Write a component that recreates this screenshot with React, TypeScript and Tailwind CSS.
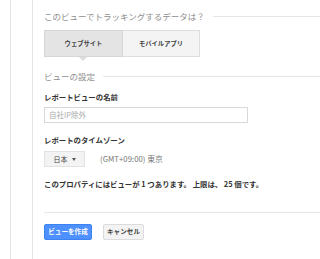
const jp = { fontFamily: '"Noto Sans CJK JP", "Liberation Sans", sans-serif' };

function SectionTitle({ text, className }: { text: string; className?: string }) {
  return (
    <div className={`flex items-center h-[12px] ${className ?? ''}`}>
      <span className="text-[8.5px] leading-[12px] text-[#8f8f8f] whitespace-nowrap">{text}</span>
      <div className="flex-1 border-t border-[#e6e6e6] ml-[8px]" />
    </div>
  );
}

export default function App() {
  return (
    <div className="w-[320px] h-[259px] bg-white flex overflow-hidden" style={jp}>
      <div className="w-[11px] border-r border-[#e3e3e3]" />
      <div className="w-[22px] border-r border-[#e3e3e3]" />
      <div className="flex-1 pl-[11px] pt-[10px]">
        <SectionTitle text="このビューでトラッキングするデータは？" />

        {/* Tabs */}
        <div className="relative mt-[8px] flex h-[27px] w-[156px]">
          <div className="w-[79px] h-full flex items-center justify-center bg-[#e4e4e4] border border-[#d6d6d6] text-[6.3px] font-bold text-[#444]">
            ウェブサイト
          </div>
          <div className="w-[77px] h-full flex items-center justify-center bg-[#f4f4f4] border border-l-0 border-[#dedede] text-[6.3px] font-bold text-[#444]">
            モバイルアプリ
          </div>
          <div className="absolute left-[35px] top-[27px] w-0 h-0 border-l-[4px] border-r-[4px] border-t-[4px] border-l-transparent border-r-transparent border-t-[#dcdcdc]" />
        </div>

        <SectionTitle text="ビューの設定" className="mt-[13px]" />

        <div className="mt-[10px] h-[10px] leading-[10px] text-[7.4px] font-bold text-[#333]">レポートビューの名前</div>
        <div className="mt-[5px] w-[204px] h-[16px] border border-[#d9d9d9] flex items-center pl-[4px] text-[7.5px] text-[#aaa]">
          自社IP除外
        </div>

        <div className="mt-[12px] h-[10px] leading-[10px] text-[7.4px] font-bold text-[#333]">レポートのタイムゾーン</div>
        <div className="mt-[6px] flex items-center h-[16px]">
          <div className="w-[41px] h-full bg-[#f3f3f3] border border-[#e2e2e2] flex items-center justify-center gap-[4px] text-[7px] text-[#444]">
            <span>日本</span>
            <span className="w-0 h-0 border-l-[2.5px] border-r-[2.5px] border-t-[3px] border-l-transparent border-r-transparent border-t-[#555]" />
          </div>
          <span className="ml-[15px] text-[7.8px] text-[#777]">(GMT+09:00) 東京</span>
        </div>

        <div className="mt-[12px] h-[10px] leading-[10px] text-[7.4px] font-bold text-[#333] whitespace-nowrap">
          このプロパティにはビューが 1 つあります。 上限は、 25 個です。
        </div>

        <div className="mt-[23px] border-t border-[#e6e6e6]" />

        <div className="mt-[11px] flex gap-[11px]">
          <button className="w-[48px] h-[16px] bg-[#4d90fe] border border-[#3c82f0] rounded-[2px] text-white text-[6.6px] font-bold flex items-center justify-center">
            ビューを作成
          </button>
          <button className="w-[41px] h-[16px] bg-[#f3f3f3] border border-[#dcdcdc] rounded-[2px] text-[#444] text-[6.6px] font-bold flex items-center justify-center">
            キャンセル
          </button>
        </div>
      </div>
    </div>
  );
}
